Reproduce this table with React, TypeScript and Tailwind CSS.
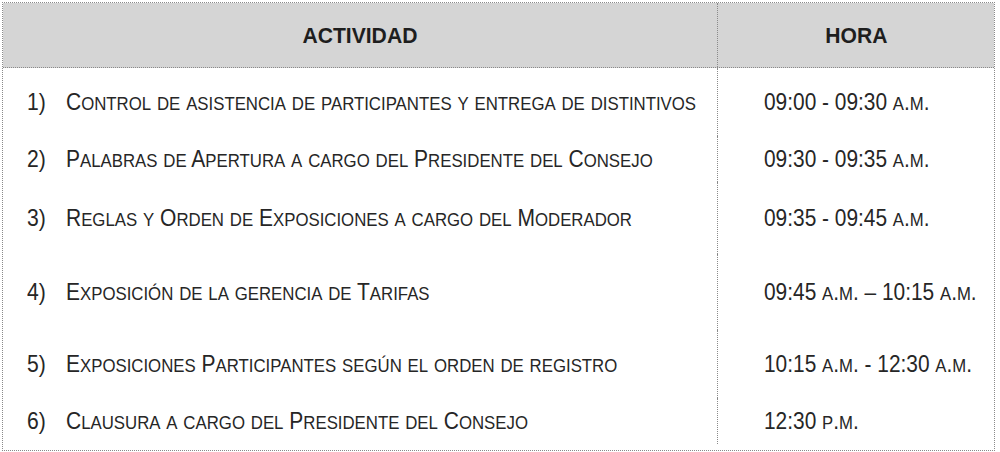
import React from "react";

const font = { fontFamily: '"Liberation Sans", Arial, sans-serif' };

// lowercase letters shown as smaller capitals, the source text keeps its case
function SmallCaps({ text }: { text: string }) {
  const parts = text.match(/[^a-zá-úñü]+|[a-zá-úñü]+/g) ?? [];
  return (
    <>
      {parts.map((p, i) =>
        /[a-zá-úñü]/.test(p) ? (
          <span key={i} className="text-[0.8em] uppercase">
            {p}
          </span>
        ) : (
          <span key={i}>{p}</span>
        ),
      )}
    </>
  );
}

const rows = [
  { n: "1)", act: "Control de asistencia de participantes y entrega de distintivos", hora: "09:00 - 09:30 a.m.", h: "h-[68px]" },
  { n: "2)", act: "Palabras de Apertura a cargo del Presidente del Consejo", hora: "09:30 - 09:35 a.m.", h: "h-[46px]" },
  { n: "3)", act: "Reglas y Orden de Exposiciones a cargo del Moderador", hora: "09:35 - 09:45 a.m.", h: "h-[72px]" },
  { n: "4)", act: "Exposición de la gerencia de Tarifas", hora: "09:45 a.m. – 10:15 a.m.", h: "h-[76px]" },
  { n: "5)", act: "Exposiciones Participantes según el orden de registro", hora: "10:15 a.m. - 12:30 a.m.", h: "h-[68px]" },
  { n: "6)", act: "Clausura a cargo del Presidente del Consejo", hora: "12:30 p.m.", h: "h-[52px] pb-[6px]" },
];

export default function App() {
  return (
    <div className="h-[452px] w-[1000px] bg-white pl-[2px] pt-[2px] text-[#262626]" style={font}>
      <div className="w-[993px] border border-dotted border-[#8a8a8a]">
        <div className="grid h-[65px] grid-cols-[715px_1fr] border-b border-dotted border-[#8a8a8a] bg-[#d5d5d5] text-[22px] font-bold text-[#1e1e1e]">
          <div className="flex items-center justify-center border-r border-dotted border-[#8a8a8a]">
            <span className="inline-block scale-x-[0.96]">ACTIVIDAD</span>
          </div>
          <div className="flex items-center justify-center">
            <span className="inline-block scale-x-[0.96]">HORA</span>
          </div>
        </div>
        {rows.map((r) => (
          <div key={r.n} className={`grid grid-cols-[715px_1fr] text-[24px] leading-none ${r.h}`}>
            <div className="flex items-center border-r border-dotted border-[#8a8a8a]">
              <span className="w-[63px] shrink-0 pl-[24px]">
                <span className="inline-block origin-left scale-x-[0.88]">{r.n}</span>
              </span>
              <span className="inline-block origin-left scale-x-[0.875] whitespace-nowrap">
                <SmallCaps text={r.act} />
              </span>
            </div>
            <div className="flex items-center pl-[46px]">
              <span className="inline-block origin-left scale-x-[0.87] whitespace-nowrap">
                <SmallCaps text={r.hora} />
              </span>
            </div>
          </div>
        ))}
      </div>
    </div>
  );
}
